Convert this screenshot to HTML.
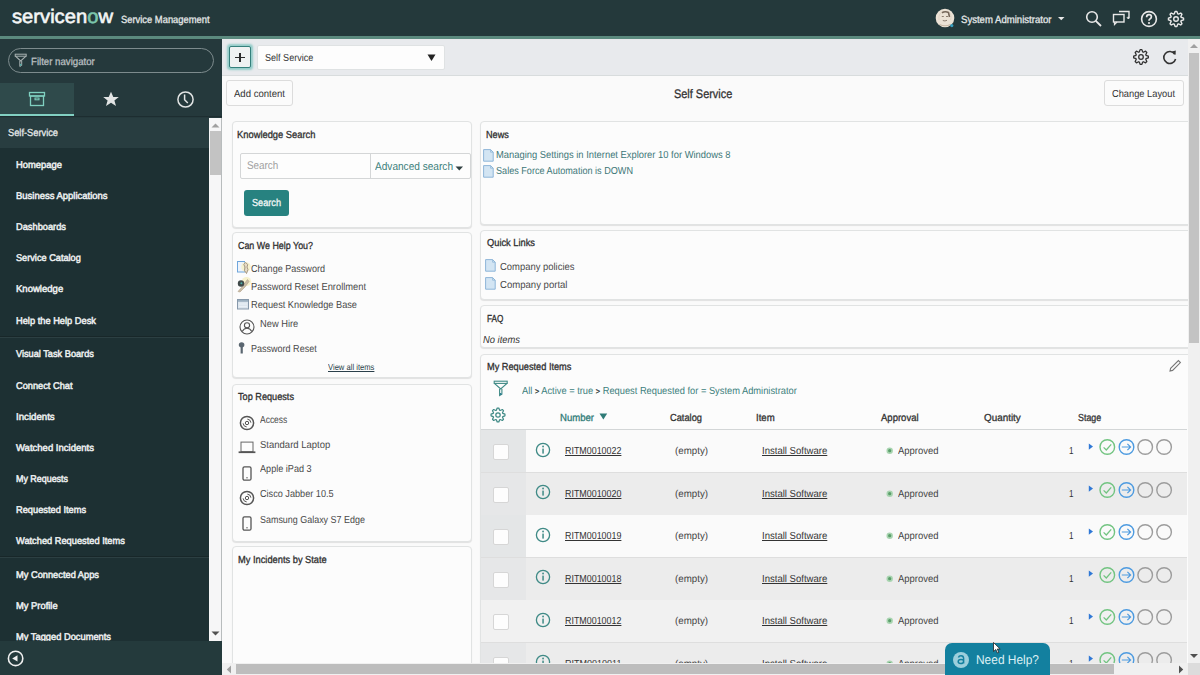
<!DOCTYPE html>
<html><head><meta charset="utf-8"><title>ServiceNow Self Service</title>
<style>
html,body{margin:0;padding:0;}
body{width:1200px;height:675px;overflow:hidden;position:relative;background:#f8f8f8;font-family:"Liberation Sans", sans-serif;}
.t{position:absolute;white-space:nowrap;transform-origin:0 0;text-rendering:geometricPrecision;}
svg{position:absolute;overflow:visible;}
</style></head><body>
<div style="position:absolute;left:0px;top:0px;width:1200px;height:36px;background:#24393b;"></div>
<div style="position:absolute;left:0px;top:36px;width:1200px;height:3px;background:#5b8a7e;"></div>
<span class="t" id="t0" style="left:12px;top:7.91px;font-size:19.5px;line-height:19.5px;color:#f4f6f6;transform:scaleX(1.0351);-webkit-text-stroke:0.6px #f4f6f6;">servicen<span style="color:#7cc7ad;-webkit-text-stroke:0.6px #7cc7ad">o</span>w</span>
<span class="t" id="t1" style="left:121px;top:16.34px;font-size:10.4px;line-height:10.4px;color:#e4e8e8;-webkit-text-stroke:0.3px #e4e8e8;transform:scaleX(0.9024);">Service Management</span>
<svg style="left:935px;top:8px" width="22" height="22" viewBox="0 0 22 22"><circle cx="10" cy="10" r="9.3" fill="#ebe2d5"/><path d="M4 12Q3 5 8.5 3.5Q13.5 2.5 15.5 6Q17 9 15.5 12" fill="none" stroke="#e0d4c4" stroke-width="1"/><path d="M7 4.8Q10 3 13.5 4.5L14.5 9" fill="none" stroke="#75675a" stroke-width="1.6"/><path d="M6.8 8.5H8.8M11 8.5H13" stroke="#8d7f70" stroke-width="1"/><path d="M7.8 12.5Q10 13.5 12 12.3" fill="none" stroke="#8d7f70" stroke-width="1"/><path d="M4.5 16.5Q10 19 15.5 16.5" fill="none" stroke="#c8b8a4" stroke-width="1.2"/><circle cx="16.8" cy="17.6" r="1.6" fill="#3aa0c0"/></svg>
<span class="t" id="t2" style="left:961px;top:16.14px;font-size:10.4px;line-height:10.4px;color:#e4e8e8;-webkit-text-stroke:0.3px #e4e8e8;transform:scaleX(0.9208);">System Administrator</span>
<svg style="left:1058px;top:17px" width="7" height="4"><path d="M0 0H6.5L3.25 3.2Z" fill="#e8e8e8"/></svg>
<svg style="left:1084px;top:9px" width="20" height="20" viewBox="0 0 20 20"><circle cx="8" cy="8" r="5.3" fill="none" stroke="#e8e8e8" stroke-width="1.6"/><path d="M11.8 11.8L17 17" stroke="#e8e8e8" stroke-width="1.8"/></svg>
<svg style="left:1110px;top:9px" width="22" height="20" viewBox="0 0 22 20"><path d="M9 2.5H19V8.5H17.5" fill="none" stroke="#e8e8e8" stroke-width="1.4"/><path d="M17 8.5L18.5 10L19 8.5" fill="#e8e8e8" stroke="#e8e8e8" stroke-width="1"/><rect x="3.5" y="5.5" width="10.5" height="7.5" fill="none" stroke="#e8e8e8" stroke-width="1.4"/><path d="M4.5 13V15.5L7 13" fill="none" stroke="#e8e8e8" stroke-width="1.2"/></svg>
<svg style="left:1139px;top:9px" width="20" height="20" viewBox="0 0 20 20"><circle cx="10" cy="10" r="7.4" fill="none" stroke="#e8e8e8" stroke-width="1.6"/><path d="M7.6 8.2Q7.6 5.6 10 5.6Q12.4 5.6 12.4 7.8Q12.4 9.2 10.9 9.9Q10 10.4 10 11.8" fill="none" stroke="#e8e8e8" stroke-width="1.7"/><circle cx="10" cy="14" r="1.1" fill="#e8e8e8"/></svg>
<svg style="left:1165px;top:8px" width="22" height="22" viewBox="0 0 22 22"><path d="M9.25 5.89L10.11 3.45L11.89 3.45L12.75 5.89L13.38 6.15L15.71 5.03L16.97 6.29L15.85 8.62L16.11 9.25L18.55 10.11L18.55 11.89L16.11 12.75L15.85 13.38L16.97 15.71L15.71 16.97L13.38 15.85L12.75 16.11L11.89 18.55L10.11 18.55L9.25 16.11L8.62 15.85L6.29 16.97L5.03 15.71L6.15 13.38L5.89 12.75L3.45 11.89L3.45 10.11L5.89 9.25L6.15 8.62L5.03 6.29L6.29 5.03L8.62 6.15Z" fill="none" stroke="#e8e8e8" stroke-width="1.4" stroke-linejoin="round"/><circle cx="11" cy="11" r="2.3" fill="none" stroke="#e8e8e8" stroke-width="1.4"/></svg>
<div style="position:absolute;left:0px;top:39px;width:222px;height:636px;background:#25393c;"></div>
<div style="position:absolute;left:8px;top:48px;width:204px;height:23px;border:1px solid #7d8b8d;border-radius:12.5px;"></div>
<svg style="left:14px;top:53px" width="14" height="15" viewBox="0 0 14 15"><rect x="1.2" y="1.2" width="11" height="2" fill="none" stroke="#a9b2b3" stroke-width="1"/><path d="M1.4 3.2L6.7 8L12 3.2" fill="none" stroke="#a9b2b3" stroke-width="1.1"/><path d="M5.8 8V13.5L7.7 12.4V8" fill="none" stroke="#a9b2b3" stroke-width="1"/><rect x="6.1" y="11" width="1.3" height="1.6" fill="#4fb8b0"/></svg>
<span class="t" id="t3" style="left:31px;top:57.54px;font-size:10.4px;line-height:10.4px;color:#b9bfc0;-webkit-text-stroke:0.3px #b9bfc0;transform:scaleX(0.9282);">Filter navigator</span>
<div style="position:absolute;left:0px;top:83px;width:74px;height:34px;background:#2f4a4b;"></div>
<div style="position:absolute;left:0px;top:114px;width:74px;height:3px;background:#82d0c2;"></div>
<svg style="left:28px;top:91px" width="18" height="16" viewBox="0 0 18 16"><rect x="1.5" y="1.5" width="15" height="3.5" fill="none" stroke="#7fd0c0" stroke-width="1.3"/><rect x="2.5" y="5" width="13" height="9.5" fill="none" stroke="#7fd0c0" stroke-width="1.3"/><rect x="7" y="7" width="4" height="1.8" fill="none" stroke="#7fd0c0" stroke-width="1"/></svg>
<svg style="left:102px;top:91px" width="18" height="17" viewBox="0 0 18 17"><path d="M9 0.8L11.3 6H16.8L12.4 9.4L14 15L9 11.7L4 15L5.6 9.4L1.2 6H6.7Z" fill="#e2e4e4"/></svg>
<svg style="left:176px;top:90px" width="19" height="19" viewBox="0 0 19 19"><circle cx="9.5" cy="9.5" r="7.6" fill="none" stroke="#e2e4e4" stroke-width="1.5"/><path d="M8.6 4.5V9.8L11.8 13" fill="none" stroke="#e2e4e4" stroke-width="1.5"/></svg>
<div style="position:absolute;left:0px;top:116px;width:222px;height:1px;background:#1d2d30;"></div>
<div style="position:absolute;left:0px;top:118px;width:209px;height:30px;background:#283d40;"></div>
<span class="t" id="t4" style="left:8px;top:129.24px;font-size:10.2px;line-height:10.2px;color:#e6eaea;-webkit-text-stroke:0.3px #e6eaea;transform:scaleX(0.9104);">Self-Service</span>
<div style="position:absolute;left:0px;top:148px;width:209px;height:493px;background:#1d3033;"></div>
<div style="position:absolute;left:0px;top:336px;width:209px;height:1px;background:#182729;"></div>
<div style="position:absolute;left:0px;top:337px;width:209px;height:1px;background:#2c3f42;"></div>
<div style="position:absolute;left:0px;top:556px;width:209px;height:1px;background:#182729;"></div>
<div style="position:absolute;left:0px;top:557px;width:209px;height:1px;background:#2c3f42;"></div>
<span class="t" id="t5" style="left:16px;top:160.66px;font-size:9.8px;line-height:9.8px;color:#eceff0;-webkit-text-stroke:0.3px #eceff0;transform:scaleX(0.9596);-webkit-text-stroke:0.5px #eceff0;">Homepage</span>
<span class="t" id="t6" style="left:16px;top:191.86px;font-size:9.8px;line-height:9.8px;color:#eceff0;-webkit-text-stroke:0.3px #eceff0;transform:scaleX(0.9655);-webkit-text-stroke:0.5px #eceff0;">Business Applications</span>
<span class="t" id="t7" style="left:16px;top:223.06px;font-size:9.8px;line-height:9.8px;color:#eceff0;-webkit-text-stroke:0.3px #eceff0;transform:scaleX(0.9465);-webkit-text-stroke:0.5px #eceff0;">Dashboards</span>
<span class="t" id="t8" style="left:16px;top:254.26px;font-size:9.8px;line-height:9.8px;color:#eceff0;-webkit-text-stroke:0.3px #eceff0;transform:scaleX(0.9368);-webkit-text-stroke:0.5px #eceff0;">Service Catalog</span>
<span class="t" id="t9" style="left:16px;top:285.46px;font-size:9.8px;line-height:9.8px;color:#eceff0;-webkit-text-stroke:0.3px #eceff0;transform:scaleX(0.9735);-webkit-text-stroke:0.5px #eceff0;">Knowledge</span>
<span class="t" id="t10" style="left:16px;top:316.66px;font-size:9.8px;line-height:9.8px;color:#eceff0;-webkit-text-stroke:0.3px #eceff0;transform:scaleX(0.9478);-webkit-text-stroke:0.5px #eceff0;">Help the Help Desk</span>
<span class="t" id="t11" style="left:16px;top:349.96px;font-size:9.8px;line-height:9.8px;color:#eceff0;-webkit-text-stroke:0.3px #eceff0;transform:scaleX(0.9389);-webkit-text-stroke:0.5px #eceff0;">Visual Task Boards</span>
<span class="t" id="t12" style="left:16px;top:381.56px;font-size:9.8px;line-height:9.8px;color:#eceff0;-webkit-text-stroke:0.3px #eceff0;transform:scaleX(0.9431);-webkit-text-stroke:0.5px #eceff0;">Connect Chat</span>
<span class="t" id="t13" style="left:16px;top:412.76px;font-size:9.8px;line-height:9.8px;color:#eceff0;-webkit-text-stroke:0.3px #eceff0;transform:scaleX(0.9868);-webkit-text-stroke:0.5px #eceff0;">Incidents</span>
<span class="t" id="t14" style="left:16px;top:443.96px;font-size:9.8px;line-height:9.8px;color:#eceff0;-webkit-text-stroke:0.3px #eceff0;transform:scaleX(0.9709);-webkit-text-stroke:0.5px #eceff0;">Watched Incidents</span>
<span class="t" id="t15" style="left:16px;top:475.16px;font-size:9.8px;line-height:9.8px;color:#eceff0;-webkit-text-stroke:0.3px #eceff0;transform:scaleX(0.9095);-webkit-text-stroke:0.5px #eceff0;">My Requests</span>
<span class="t" id="t16" style="left:16px;top:506.46px;font-size:9.8px;line-height:9.8px;color:#eceff0;-webkit-text-stroke:0.3px #eceff0;transform:scaleX(0.9465);-webkit-text-stroke:0.5px #eceff0;">Requested Items</span>
<span class="t" id="t17" style="left:16px;top:537.46px;font-size:9.8px;line-height:9.8px;color:#eceff0;-webkit-text-stroke:0.3px #eceff0;transform:scaleX(0.9453);-webkit-text-stroke:0.5px #eceff0;">Watched Requested Items</span>
<span class="t" id="t18" style="left:16px;top:570.66px;font-size:9.8px;line-height:9.8px;color:#eceff0;-webkit-text-stroke:0.3px #eceff0;transform:scaleX(0.9465);-webkit-text-stroke:0.5px #eceff0;">My Connected Apps</span>
<span class="t" id="t19" style="left:16px;top:601.66px;font-size:9.8px;line-height:9.8px;color:#eceff0;-webkit-text-stroke:0.3px #eceff0;transform:scaleX(0.9549);-webkit-text-stroke:0.5px #eceff0;">My Profile</span>
<span class="t" id="t20" style="left:16px;top:632.86px;font-size:9.8px;line-height:9.8px;color:#eceff0;-webkit-text-stroke:0.3px #eceff0;transform:scaleX(0.9497);-webkit-text-stroke:0.5px #eceff0;">My Tagged Documents</span>
<div style="position:absolute;left:209px;top:118px;width:13px;height:523px;background:#f6f6f7;"></div>
<div style="position:absolute;left:210px;top:131px;width:11px;height:44px;background:#c3c3c3;"></div>
<svg style="left:211px;top:123px" width="9" height="5"><path d="M0.5 4.5H8.5L4.5 0.5Z" fill="#a0a0a0"/></svg>
<svg style="left:211px;top:631px" width="9" height="5"><path d="M0.5 0.5H8.5L4.5 4.5Z" fill="#505050"/></svg>
<div style="position:absolute;left:0px;top:641px;width:222px;height:34px;background:#243a3c;"></div>
<svg style="left:7px;top:650px" width="18" height="18" viewBox="0 0 18 18"><circle cx="8.6" cy="8.4" r="7.2" fill="none" stroke="#f0f0f0" stroke-width="1.6"/><path d="M5.2 8.4L10.5 5.2V11.6Z" fill="#f0f0f0"/></svg>
<div style="position:absolute;left:222px;top:39px;width:966px;height:37px;background:#e8eaed;"></div>
<div style="position:absolute;left:222px;top:75px;width:966px;height:1px;background:#d8dcdd;"></div>
<div style="position:absolute;left:222px;top:76px;width:966px;height:587px;background:#fafafa;"></div>
<div style="position:absolute;left:221px;top:118px;width:1px;height:523px;background:#b8bcbd;"></div>
<div style="position:absolute;left:228.5px;top:45.5px;width:20px;height:20px;background:#eff2f2;border:1.5px solid #35807c;border-radius:2px;box-shadow:0 0 2px 1.5px rgba(120,195,190,0.75);"></div>
<div style="position:absolute;left:235.3px;top:56.8px;width:9.6px;height:1.4px;background:#2b2b2b;"></div>
<div style="position:absolute;left:239.4px;top:52.6px;width:1.4px;height:9.6px;background:#2b2b2b;"></div>
<div style="position:absolute;left:257px;top:45px;width:186px;height:23px;background:#fdfdfd;border:1px solid #dfe2e3;border-radius:2px;"></div>
<span class="t" id="t21" style="left:264.7px;top:54.04px;font-size:10.2px;line-height:10.2px;color:#333;transform:scaleX(0.8885);">Self Service</span>
<svg style="left:427px;top:54px" width="9" height="8"><path d="M0.5 0.5H8.5L4.5 7Z" fill="#222"/></svg>
<svg style="left:1129.6px;top:45.7px" width="22" height="22" viewBox="0 0 22 22"><path d="M9.28 5.99L10.13 3.65L11.87 3.65L12.72 5.99L13.33 6.24L15.58 5.19L16.81 6.42L15.76 8.67L16.01 9.28L18.35 10.13L18.35 11.87L16.01 12.72L15.76 13.33L16.81 15.58L15.58 16.81L13.33 15.76L12.72 16.01L11.87 18.35L10.13 18.35L9.28 16.01L8.67 15.76L6.42 16.81L5.19 15.58L6.24 13.33L5.99 12.72L3.65 11.87L3.65 10.13L5.99 9.28L6.24 8.67L5.19 6.42L6.42 5.19L8.67 6.24Z" fill="none" stroke="#333" stroke-width="1.3" stroke-linejoin="round"/><circle cx="11" cy="11" r="2.3" fill="none" stroke="#333" stroke-width="1.3"/></svg>
<svg style="left:1160px;top:47px" width="20" height="20" viewBox="0 0 20 20"><path d="M14.8 7.2A6 6 0 1 0 15.6 12" fill="none" stroke="#333" stroke-width="1.6"/><path d="M12 4.5L15.8 3.6L15.5 8Z" fill="#333"/></svg>
<div style="position:absolute;left:226px;top:80px;width:65px;height:24px;border:1px solid #dcdcdc;border-radius:3px;background:#fbfbfb;"></div>
<span class="t" id="t22" style="left:234.2px;top:90.04px;font-size:10.2px;line-height:10.2px;color:#333;transform:scaleX(0.9379);">Add content</span>
<span class="t" id="t23" style="left:673.75px;top:87.90px;font-size:12.4px;line-height:12.4px;color:#333;-webkit-text-stroke:0.3px #333;transform:scaleX(0.8817);">Self Service</span>
<div style="position:absolute;left:1104px;top:80px;width:78px;height:24px;border:1px solid #dcdcdc;border-radius:3px;background:#fbfbfb;"></div>
<span class="t" id="t24" style="left:1112px;top:89.94px;font-size:10.2px;line-height:10.2px;color:#333;transform:scaleX(0.9116);">Change Layout</span>
<div style="position:absolute;left:232px;top:121px;width:238px;height:105px;border:1px solid #e1e3e3;border-radius:4px;background:#fcfcfc;box-shadow:0 1px 1px rgba(0,0,0,0.10);"></div>
<span class="t" id="t25" style="left:237.4px;top:130.74px;font-size:10.2px;line-height:10.2px;color:#2f2f2f;-webkit-text-stroke:0.3px #2f2f2f;transform:scaleX(0.9178);">Knowledge Search</span>
<div style="position:absolute;left:240px;top:153px;width:229px;height:24px;border:1px solid #d4d6d7;border-radius:2px;background:#fdfdfd;"></div>
<div style="position:absolute;left:370px;top:154px;width:1px;height:24px;background:#d4d6d7;"></div>
<span class="t" id="t26" style="left:246.75px;top:161.39px;font-size:11.2px;line-height:11.2px;color:#a0a0a0;transform:scaleX(0.8829);">Search</span>
<span class="t" id="t27" style="left:374.9px;top:161.69px;font-size:11.2px;line-height:11.2px;color:#3b7f7b;transform:scaleX(0.9022);">Advanced search</span>
<svg style="left:455px;top:166px" width="9" height="6"><path d="M0.5 0.5H8L4.25 4.5Z" fill="#2f3f40"/></svg>
<div style="position:absolute;left:244px;top:190px;width:45px;height:26px;background:#278280;border-radius:3px;"></div>
<span class="t" id="t28" style="left:252px;top:199.49px;font-size:10.2px;line-height:10.2px;color:#f4f8f8;-webkit-text-stroke:0.3px #f4f8f8;transform:scaleX(0.8984);">Search</span>
<div style="position:absolute;left:232px;top:232px;width:238px;height:144px;border:1px solid #e1e3e3;border-radius:4px;background:#fcfcfc;box-shadow:0 1px 1px rgba(0,0,0,0.10);"></div>
<span class="t" id="t29" style="left:237.6px;top:242.24px;font-size:10.2px;line-height:10.2px;color:#2f2f2f;-webkit-text-stroke:0.3px #2f2f2f;transform:scaleX(0.8730);">Can We Help You?</span>
<svg style="left:236px;top:260px" width="15" height="16" viewBox="0 0 15 16"><rect x="1.5" y="1.5" width="7" height="10.5" fill="#eef4fb" stroke="#6fa6dc" stroke-width="1"/><circle cx="10" cy="7" r="4.8" fill="#f6f0c4" opacity="0.8"/><path d="M9.5 2.5L11.8 4.5L11 7L12 9.5L10.5 13.5L8.5 10.5L9 7L7.8 4.5Z" fill="#e6dcc8" stroke="#9d8f78" stroke-width="0.9"/></svg>
<span class="t" id="t30" style="left:250.9px;top:264.84px;font-size:10.2px;line-height:10.2px;color:#4a4a4a;transform:scaleX(0.8889);">Change Password</span>
<svg style="left:236px;top:276px" width="15" height="17" viewBox="0 0 15 17"><circle cx="10.5" cy="5.5" r="4.6" fill="#f6f0c4" opacity="0.85"/><path d="M2 15.5L5.5 11.5L11.5 3.5L13 5.5L9 11L4 16Z" fill="#cbbda6" stroke="#b0a088" stroke-width="0.6"/><circle cx="5" cy="7.5" r="3.2" fill="#404a4a"/><circle cx="5.4" cy="7.2" r="1" fill="#4fb0a8"/></svg>
<span class="t" id="t31" style="left:251px;top:282.84px;font-size:10.2px;line-height:10.2px;color:#4a4a4a;transform:scaleX(0.9149);">Password Reset Enrollment</span>
<svg style="left:237px;top:299px" width="12" height="11" viewBox="0 0 12 11"><rect x="0.5" y="0.5" width="11" height="9.5" fill="#dde6ee" stroke="#8799ab" stroke-width="1"/><rect x="1" y="1" width="10" height="1.8" fill="#9cb0c0"/><path d="M2 5H10M2 7.5H10" stroke="#eef3f7" stroke-width="0.8"/></svg>
<span class="t" id="t32" style="left:251px;top:300.94px;font-size:10.2px;line-height:10.2px;color:#4a4a4a;transform:scaleX(0.9041);">Request Knowledge Base</span>
<svg style="left:239px;top:319px" width="16" height="16" viewBox="0 0 16 16"><circle cx="8" cy="8" r="7" fill="none" stroke="#555" stroke-width="1.1"/><circle cx="8" cy="6.3" r="2.6" fill="none" stroke="#555" stroke-width="1.1"/><path d="M3.2 12.5Q5 9.3 8 9.3Q11 9.3 12.8 12.5" fill="none" stroke="#555" stroke-width="1.1"/></svg>
<span class="t" id="t33" style="left:259.7px;top:319.84px;font-size:10.2px;line-height:10.2px;color:#4a4a4a;transform:scaleX(0.9143);">New Hire</span>
<svg style="left:238px;top:342px" width="8" height="12" viewBox="0 0 8 12"><ellipse cx="3.6" cy="2.8" rx="2.8" ry="2.6" fill="#5a6670"/><rect x="2.6" y="4" width="2.2" height="7.5" fill="#5a6670"/></svg>
<span class="t" id="t34" style="left:251px;top:344.94px;font-size:10.2px;line-height:10.2px;color:#4a4a4a;transform:scaleX(0.8856);">Password Reset</span>
<span class="t" id="t35" style="left:328.3px;top:363.12px;font-size:8.6px;line-height:8.6px;color:#2a3f4a;text-decoration:underline;transform:scaleX(0.8857);">View all items</span>
<div style="position:absolute;left:232px;top:384px;width:238px;height:156px;border:1px solid #e1e3e3;border-radius:4px;background:#fcfcfc;box-shadow:0 1px 1px rgba(0,0,0,0.10);"></div>
<span class="t" id="t36" style="left:238px;top:392.54px;font-size:10.2px;line-height:10.2px;color:#2f2f2f;-webkit-text-stroke:0.3px #2f2f2f;transform:scaleX(0.8989);">Top Requests</span>
<svg style="left:239px;top:415px" width="16" height="16" viewBox="0 0 16 16"><circle cx="8" cy="8" r="6.6" fill="none" stroke="#555" stroke-width="1.5"/><circle cx="8" cy="8" r="1.7" fill="none" stroke="#555" stroke-width="1"/><path d="M7.66 11.89A3.9 3.9 0 0 1 4.11 8.34M8.34 4.11A3.9 3.9 0 0 1 11.89 7.66" fill="none" stroke="#555" stroke-width="1"/></svg>
<span class="t" id="t37" style="left:259.7px;top:415.94px;font-size:10.2px;line-height:10.2px;color:#4a4a4a;transform:scaleX(0.8312);">Access</span>
<svg style="left:238px;top:441px" width="18" height="13" viewBox="0 0 18 13"><rect x="3" y="1.1" width="12" height="9.6" fill="none" stroke="#666" stroke-width="1"/><rect x="0.6" y="10.4" width="16.8" height="1.7" fill="#555"/></svg>
<span class="t" id="t38" style="left:259.7px;top:440.54px;font-size:10.2px;line-height:10.2px;color:#4a4a4a;transform:scaleX(0.9331);">Standard Laptop</span>
<svg style="left:242px;top:466px" width="10" height="15" viewBox="0 0 10 15"><rect x="1" y="0.8" width="8" height="13.4" rx="1.5" fill="none" stroke="#555" stroke-width="1.3"/><circle cx="5" cy="11.8" r="0.7" fill="#555"/></svg>
<span class="t" id="t39" style="left:259.7px;top:465.44px;font-size:10.2px;line-height:10.2px;color:#4a4a4a;transform:scaleX(0.8930);">Apple iPad 3</span>
<svg style="left:239px;top:490px" width="16" height="16" viewBox="0 0 16 16"><circle cx="8" cy="8" r="6.6" fill="none" stroke="#555" stroke-width="1.5"/><circle cx="8" cy="8" r="1.7" fill="none" stroke="#555" stroke-width="1"/><path d="M7.66 11.89A3.9 3.9 0 0 1 4.11 8.34M8.34 4.11A3.9 3.9 0 0 1 11.89 7.66" fill="none" stroke="#555" stroke-width="1"/></svg>
<span class="t" id="t40" style="left:259.7px;top:490.34px;font-size:10.2px;line-height:10.2px;color:#4a4a4a;transform:scaleX(0.8962);">Cisco Jabber 10.5</span>
<svg style="left:242px;top:516px" width="10" height="15" viewBox="0 0 10 15"><rect x="1" y="0.8" width="8" height="13.4" rx="1.5" fill="none" stroke="#555" stroke-width="1.3"/><circle cx="5" cy="11.8" r="0.7" fill="#555"/></svg>
<span class="t" id="t41" style="left:259.7px;top:515.74px;font-size:10.2px;line-height:10.2px;color:#4a4a4a;transform:scaleX(0.8778);">Samsung Galaxy S7 Edge</span>
<div style="position:absolute;left:232px;top:546px;width:238px;height:138px;border:1px solid #e1e3e3;border-radius:4px;background:#fcfcfc;box-shadow:0 1px 1px rgba(0,0,0,0.10);"></div>
<span class="t" id="t42" style="left:237.8px;top:555.74px;font-size:10.2px;line-height:10.2px;color:#2f2f2f;-webkit-text-stroke:0.3px #2f2f2f;transform:scaleX(0.9116);">My Incidents by State</span>
<div style="position:absolute;left:480px;top:121px;width:712px;height:102px;border:1px solid #e1e3e3;border-radius:4px;background:#fcfcfc;box-shadow:0 1px 1px rgba(0,0,0,0.10);"></div>
<span class="t" id="t43" style="left:486.4px;top:130.74px;font-size:10.2px;line-height:10.2px;color:#2f2f2f;-webkit-text-stroke:0.3px #2f2f2f;transform:scaleX(0.8947);">News</span>
<svg style="left:483px;top:149px" width="11" height="13" viewBox="0 0 11 13"><path d="M0.6 0.6H7.6L10.2 3.2V12.2H0.6Z" fill="#d3e5f3" stroke="#8fb6d8" stroke-width="1"/><path d="M7.6 0.6V3.2H10.2" fill="none" stroke="#8fb6d8" stroke-width="0.8"/></svg>
<span class="t" id="t44" style="left:495.5px;top:151.34px;font-size:10.2px;line-height:10.2px;color:#3c7778;transform:scaleX(0.9202);">Managing Settings in Internet Explorer 10 for Windows 8</span>
<svg style="left:483px;top:165px" width="11" height="13" viewBox="0 0 11 13"><path d="M0.6 0.6H7.6L10.2 3.2V12.2H0.6Z" fill="#d3e5f3" stroke="#8fb6d8" stroke-width="1"/><path d="M7.6 0.6V3.2H10.2" fill="none" stroke="#8fb6d8" stroke-width="0.8"/></svg>
<span class="t" id="t45" style="left:495.5px;top:166.94px;font-size:10.2px;line-height:10.2px;color:#3c7778;transform:scaleX(0.8929);">Sales Force Automation is DOWN</span>
<div style="position:absolute;left:480px;top:230px;width:712px;height:68px;border:1px solid #e1e3e3;border-radius:4px;background:#fcfcfc;box-shadow:0 1px 1px rgba(0,0,0,0.10);"></div>
<span class="t" id="t46" style="left:486.6px;top:239.44px;font-size:10.2px;line-height:10.2px;color:#2f2f2f;-webkit-text-stroke:0.3px #2f2f2f;transform:scaleX(0.9116);">Quick Links</span>
<svg style="left:485px;top:259px" width="11" height="13" viewBox="0 0 11 13"><path d="M0.6 0.6H7.6L10.2 3.2V12.2H0.6Z" fill="#d3e5f3" stroke="#8fb6d8" stroke-width="1"/><path d="M7.6 0.6V3.2H10.2" fill="none" stroke="#8fb6d8" stroke-width="0.8"/></svg>
<span class="t" id="t47" style="left:500px;top:262.54px;font-size:10.2px;line-height:10.2px;color:#4a4a4a;transform:scaleX(0.9265);">Company policies</span>
<svg style="left:485px;top:277px" width="11" height="13" viewBox="0 0 11 13"><path d="M0.6 0.6H7.6L10.2 3.2V12.2H0.6Z" fill="#d3e5f3" stroke="#8fb6d8" stroke-width="1"/><path d="M7.6 0.6V3.2H10.2" fill="none" stroke="#8fb6d8" stroke-width="0.8"/></svg>
<span class="t" id="t48" style="left:500px;top:281.24px;font-size:10.2px;line-height:10.2px;color:#4a4a4a;transform:scaleX(0.9385);">Company portal</span>
<div style="position:absolute;left:480px;top:305px;width:712px;height:41px;border:1px solid #e1e3e3;border-radius:4px;background:#fcfcfc;box-shadow:0 1px 1px rgba(0,0,0,0.10);"></div>
<span class="t" id="t49" style="left:486.6px;top:314.54px;font-size:10.2px;line-height:10.2px;color:#2f2f2f;-webkit-text-stroke:0.3px #2f2f2f;transform:scaleX(0.8043);">FAQ</span>
<span class="t" id="t50" style="left:483.3px;top:335.74px;font-size:10.2px;line-height:10.2px;color:#333;font-style:italic;transform:scaleX(0.9203);">No items</span>
<div style="position:absolute;left:480px;top:354px;width:712px;height:338px;border:1px solid #e1e3e3;border-radius:4px;background:#fcfcfc;box-shadow:0 1px 1px rgba(0,0,0,0.10);"></div>
<span class="t" id="t51" style="left:486.7px;top:363.14px;font-size:10.2px;line-height:10.2px;color:#2f2f2f;-webkit-text-stroke:0.3px #2f2f2f;transform:scaleX(0.9033);">My Requested Items</span>
<svg style="left:1168px;top:359px" width="14" height="14" viewBox="0 0 14 14"><path d="M2 12L2.6 9.4L10.4 1.6L12.4 3.6L4.6 11.4Z" fill="none" stroke="#777" stroke-width="1.1"/></svg>
<svg style="left:493px;top:380px" width="16" height="17" viewBox="0 0 16 17"><rect x="1.2" y="1.2" width="13" height="2.2" fill="none" stroke="#3f8a86" stroke-width="1.1"/><path d="M1.4 3.4L7.7 9L14 3.4" fill="none" stroke="#3f8a86" stroke-width="1.2"/><path d="M6.6 9V15.5L8.9 14.2V9" fill="none" stroke="#3f8a86" stroke-width="1.1"/><rect x="7" y="13" width="1.5" height="2" fill="#2f7f90"/></svg>
<span class="t" id="t52" style="left:521.9px;top:386.74px;font-size:10.2px;line-height:10.2px;color:#3c7f7c;transform:scaleX(0.9130);">All <span style="font-size:8px;color:#2d3b3b;-webkit-text-stroke:0.3px #2d3b3b">&gt;</span> Active = true <span style="font-size:8px;color:#2d3b3b;-webkit-text-stroke:0.3px #2d3b3b">&gt;</span> Request Requested for = System Administrator</span>
<svg style="left:486.7px;top:404.2px" width="22" height="22" viewBox="0 0 22 22"><path d="M9.38 6.27L10.18 4.05L11.82 4.05L12.62 6.27L13.20 6.51L15.33 5.50L16.50 6.67L15.49 8.80L15.73 9.38L17.95 10.18L17.95 11.82L15.73 12.62L15.49 13.20L16.50 15.33L15.33 16.50L13.20 15.49L12.62 15.73L11.82 17.95L10.18 17.95L9.38 15.73L8.80 15.49L6.67 16.50L5.50 15.33L6.51 13.20L6.27 12.62L4.05 11.82L4.05 10.18L6.27 9.38L6.51 8.80L5.50 6.67L6.67 5.50L8.80 6.51Z" fill="none" stroke="#3f8a86" stroke-width="1.2" stroke-linejoin="round"/><circle cx="11" cy="11" r="2.2" fill="none" stroke="#3f8a86" stroke-width="1.2"/></svg>
<span class="t" id="t53" style="left:560.1px;top:414.04px;font-size:10.2px;line-height:10.2px;color:#2f7b77;-webkit-text-stroke:0.3px #2f7b77;transform:scaleX(0.9383);">Number</span>
<svg style="left:599px;top:413px" width="9" height="8"><path d="M0.5 0.5H8.2L4.35 6.6Z" fill="#2f7b77"/></svg>
<span class="t" id="t54" style="left:669.7px;top:414.04px;font-size:10.2px;line-height:10.2px;color:#333;-webkit-text-stroke:0.3px #333;transform:scaleX(0.9110);">Catalog</span>
<span class="t" id="t55" style="left:756.3px;top:414.04px;font-size:10.2px;line-height:10.2px;color:#333;-webkit-text-stroke:0.3px #333;transform:scaleX(0.9431);">Item</span>
<span class="t" id="t56" style="left:881.2px;top:414.04px;font-size:10.2px;line-height:10.2px;color:#333;-webkit-text-stroke:0.3px #333;transform:scaleX(0.9349);">Approval</span>
<span class="t" id="t57" style="left:983.9px;top:414.04px;font-size:10.2px;line-height:10.2px;color:#333;-webkit-text-stroke:0.3px #333;transform:scaleX(0.9696);">Quantity</span>
<span class="t" id="t58" style="left:1078px;top:414.04px;font-size:10.2px;line-height:10.2px;color:#333;-webkit-text-stroke:0.3px #333;transform:scaleX(0.8714);">Stage</span>
<div style="position:absolute;left:481px;top:428.5px;width:706px;height:1.5px;background:#d3d6d7;"></div>
<div style="position:absolute;left:481px;top:430.0px;width:706px;height:42.5px;background:#fafafa;"></div>
<div style="position:absolute;left:481px;top:430.0px;width:45px;height:42.5px;background:#e4e6e7;"></div>
<div style="position:absolute;left:481px;top:472.0px;width:706px;height:1px;background:#dedede;"></div>
<div style="position:absolute;left:493px;top:444.0px;width:14px;height:14px;background:#fdfdfd;border:1px solid #d6d6d6;border-radius:2px;"></div>
<svg style="left:535px;top:441.5px" width="16" height="16" viewBox="0 0 16 16"><circle cx="8" cy="8" r="6.6" fill="none" stroke="#3f8a86" stroke-width="1.3"/><rect x="7.3" y="6.6" width="1.5" height="5" fill="#3f8a86"/><circle cx="8.05" cy="4.5" r="0.9" fill="#3f8a86"/></svg>
<span class="t" id="t59" style="left:565.4px;top:447.24px;font-size:10.2px;line-height:10.2px;color:#333;text-decoration:underline;transform:scaleX(0.8736);">RITM0010022</span>
<span class="t" id="t60" style="left:675px;top:447.24px;font-size:10.2px;line-height:10.2px;color:#444;transform:scaleX(0.9557);">(empty)</span>
<span class="t" id="t61" style="left:761.7px;top:447.24px;font-size:10.2px;line-height:10.2px;color:#333;text-decoration:underline;transform:scaleX(0.9375);">Install Software</span>
<svg style="left:886px;top:447.2px" width="8" height="8"><circle cx="3.7" cy="3.7" r="3.2" fill="#a8d4b0"/><circle cx="3.7" cy="3.7" r="1.6" fill="#5a9e6a"/></svg>
<span class="t" id="t62" style="left:898px;top:447.24px;font-size:10.2px;line-height:10.2px;color:#444;transform:scaleX(0.9284);">Approved</span>
<span class="t" id="t63" style="left:1068.7px;top:447.24px;font-size:10.2px;line-height:10.2px;color:#333;transform:scaleX(0.7934);">1</span>
<svg style="left:1088px;top:442.5px" width="6" height="8"><path d="M0.8 0.6L5 3.6L0.8 6.8Z" fill="#2f78d6"/></svg>
<svg style="left:1099px;top:439.0px" width="74" height="16" viewBox="0 0 74 16"><circle cx="8.3" cy="8" r="7.3" fill="none" stroke="#72c481" stroke-width="1.4"/><path d="M4.6 8.4L7.3 11L12.2 5.4" fill="none" stroke="#72c481" stroke-width="1.3"/><circle cx="27.5" cy="8" r="7.3" fill="none" stroke="#4d9be0" stroke-width="1.4"/><path d="M22.8 8H31.6M28.4 4.8L31.6 8L28.4 11.2" fill="none" stroke="#4d9be0" stroke-width="1.2"/><circle cx="46.2" cy="8" r="7.3" fill="none" stroke="#9c9c9c" stroke-width="1.4"/><circle cx="65.1" cy="8" r="7.3" fill="none" stroke="#9c9c9c" stroke-width="1.4"/></svg>
<div style="position:absolute;left:481px;top:472.5px;width:706px;height:42.5px;background:#ececec;"></div>
<div style="position:absolute;left:481px;top:472.5px;width:45px;height:42.5px;background:#e6e7e8;"></div>
<div style="position:absolute;left:481px;top:514.5px;width:706px;height:1px;background:#dedede;"></div>
<div style="position:absolute;left:493px;top:486.5px;width:14px;height:14px;background:#fdfdfd;border:1px solid #d6d6d6;border-radius:2px;"></div>
<svg style="left:535px;top:484.0px" width="16" height="16" viewBox="0 0 16 16"><circle cx="8" cy="8" r="6.6" fill="none" stroke="#3f8a86" stroke-width="1.3"/><rect x="7.3" y="6.6" width="1.5" height="5" fill="#3f8a86"/><circle cx="8.05" cy="4.5" r="0.9" fill="#3f8a86"/></svg>
<span class="t" id="t64" style="left:565.4px;top:489.74px;font-size:10.2px;line-height:10.2px;color:#333;text-decoration:underline;transform:scaleX(0.8736);">RITM0010020</span>
<span class="t" id="t65" style="left:675px;top:489.74px;font-size:10.2px;line-height:10.2px;color:#444;transform:scaleX(0.9557);">(empty)</span>
<span class="t" id="t66" style="left:761.7px;top:489.74px;font-size:10.2px;line-height:10.2px;color:#333;text-decoration:underline;transform:scaleX(0.9375);">Install Software</span>
<svg style="left:886px;top:489.7px" width="8" height="8"><circle cx="3.7" cy="3.7" r="3.2" fill="#a8d4b0"/><circle cx="3.7" cy="3.7" r="1.6" fill="#5a9e6a"/></svg>
<span class="t" id="t67" style="left:898px;top:489.74px;font-size:10.2px;line-height:10.2px;color:#444;transform:scaleX(0.9284);">Approved</span>
<span class="t" id="t68" style="left:1068.7px;top:489.74px;font-size:10.2px;line-height:10.2px;color:#333;transform:scaleX(0.7934);">1</span>
<svg style="left:1088px;top:485.0px" width="6" height="8"><path d="M0.8 0.6L5 3.6L0.8 6.8Z" fill="#2f78d6"/></svg>
<svg style="left:1099px;top:481.5px" width="74" height="16" viewBox="0 0 74 16"><circle cx="8.3" cy="8" r="7.3" fill="none" stroke="#72c481" stroke-width="1.4"/><path d="M4.6 8.4L7.3 11L12.2 5.4" fill="none" stroke="#72c481" stroke-width="1.3"/><circle cx="27.5" cy="8" r="7.3" fill="none" stroke="#4d9be0" stroke-width="1.4"/><path d="M22.8 8H31.6M28.4 4.8L31.6 8L28.4 11.2" fill="none" stroke="#4d9be0" stroke-width="1.2"/><circle cx="46.2" cy="8" r="7.3" fill="none" stroke="#9c9c9c" stroke-width="1.4"/><circle cx="65.1" cy="8" r="7.3" fill="none" stroke="#9c9c9c" stroke-width="1.4"/></svg>
<div style="position:absolute;left:481px;top:515.0px;width:706px;height:42.5px;background:#fafafa;"></div>
<div style="position:absolute;left:481px;top:515.0px;width:45px;height:42.5px;background:#e4e6e7;"></div>
<div style="position:absolute;left:481px;top:557.0px;width:706px;height:1px;background:#dedede;"></div>
<div style="position:absolute;left:493px;top:529.0px;width:14px;height:14px;background:#fdfdfd;border:1px solid #d6d6d6;border-radius:2px;"></div>
<svg style="left:535px;top:526.5px" width="16" height="16" viewBox="0 0 16 16"><circle cx="8" cy="8" r="6.6" fill="none" stroke="#3f8a86" stroke-width="1.3"/><rect x="7.3" y="6.6" width="1.5" height="5" fill="#3f8a86"/><circle cx="8.05" cy="4.5" r="0.9" fill="#3f8a86"/></svg>
<span class="t" id="t69" style="left:565.4px;top:532.24px;font-size:10.2px;line-height:10.2px;color:#333;text-decoration:underline;transform:scaleX(0.8736);">RITM0010019</span>
<span class="t" id="t70" style="left:675px;top:532.24px;font-size:10.2px;line-height:10.2px;color:#444;transform:scaleX(0.9557);">(empty)</span>
<span class="t" id="t71" style="left:761.7px;top:532.24px;font-size:10.2px;line-height:10.2px;color:#333;text-decoration:underline;transform:scaleX(0.9375);">Install Software</span>
<svg style="left:886px;top:532.2px" width="8" height="8"><circle cx="3.7" cy="3.7" r="3.2" fill="#a8d4b0"/><circle cx="3.7" cy="3.7" r="1.6" fill="#5a9e6a"/></svg>
<span class="t" id="t72" style="left:898px;top:532.24px;font-size:10.2px;line-height:10.2px;color:#444;transform:scaleX(0.9284);">Approved</span>
<span class="t" id="t73" style="left:1068.7px;top:532.24px;font-size:10.2px;line-height:10.2px;color:#333;transform:scaleX(0.7934);">1</span>
<svg style="left:1088px;top:527.5px" width="6" height="8"><path d="M0.8 0.6L5 3.6L0.8 6.8Z" fill="#2f78d6"/></svg>
<svg style="left:1099px;top:524.0px" width="74" height="16" viewBox="0 0 74 16"><circle cx="8.3" cy="8" r="7.3" fill="none" stroke="#72c481" stroke-width="1.4"/><path d="M4.6 8.4L7.3 11L12.2 5.4" fill="none" stroke="#72c481" stroke-width="1.3"/><circle cx="27.5" cy="8" r="7.3" fill="none" stroke="#4d9be0" stroke-width="1.4"/><path d="M22.8 8H31.6M28.4 4.8L31.6 8L28.4 11.2" fill="none" stroke="#4d9be0" stroke-width="1.2"/><circle cx="46.2" cy="8" r="7.3" fill="none" stroke="#9c9c9c" stroke-width="1.4"/><circle cx="65.1" cy="8" r="7.3" fill="none" stroke="#9c9c9c" stroke-width="1.4"/></svg>
<div style="position:absolute;left:481px;top:557.5px;width:706px;height:42.5px;background:#ececec;"></div>
<div style="position:absolute;left:481px;top:557.5px;width:45px;height:42.5px;background:#e6e7e8;"></div>
<div style="position:absolute;left:481px;top:599.5px;width:706px;height:1px;background:#dedede;"></div>
<div style="position:absolute;left:493px;top:571.5px;width:14px;height:14px;background:#fdfdfd;border:1px solid #d6d6d6;border-radius:2px;"></div>
<svg style="left:535px;top:569.0px" width="16" height="16" viewBox="0 0 16 16"><circle cx="8" cy="8" r="6.6" fill="none" stroke="#3f8a86" stroke-width="1.3"/><rect x="7.3" y="6.6" width="1.5" height="5" fill="#3f8a86"/><circle cx="8.05" cy="4.5" r="0.9" fill="#3f8a86"/></svg>
<span class="t" id="t74" style="left:565.4px;top:574.74px;font-size:10.2px;line-height:10.2px;color:#333;text-decoration:underline;transform:scaleX(0.8736);">RITM0010018</span>
<span class="t" id="t75" style="left:675px;top:574.74px;font-size:10.2px;line-height:10.2px;color:#444;transform:scaleX(0.9557);">(empty)</span>
<span class="t" id="t76" style="left:761.7px;top:574.74px;font-size:10.2px;line-height:10.2px;color:#333;text-decoration:underline;transform:scaleX(0.9375);">Install Software</span>
<svg style="left:886px;top:574.7px" width="8" height="8"><circle cx="3.7" cy="3.7" r="3.2" fill="#a8d4b0"/><circle cx="3.7" cy="3.7" r="1.6" fill="#5a9e6a"/></svg>
<span class="t" id="t77" style="left:898px;top:574.74px;font-size:10.2px;line-height:10.2px;color:#444;transform:scaleX(0.9284);">Approved</span>
<span class="t" id="t78" style="left:1068.7px;top:574.74px;font-size:10.2px;line-height:10.2px;color:#333;transform:scaleX(0.7934);">1</span>
<svg style="left:1088px;top:570.0px" width="6" height="8"><path d="M0.8 0.6L5 3.6L0.8 6.8Z" fill="#2f78d6"/></svg>
<svg style="left:1099px;top:566.5px" width="74" height="16" viewBox="0 0 74 16"><circle cx="8.3" cy="8" r="7.3" fill="none" stroke="#72c481" stroke-width="1.4"/><path d="M4.6 8.4L7.3 11L12.2 5.4" fill="none" stroke="#72c481" stroke-width="1.3"/><circle cx="27.5" cy="8" r="7.3" fill="none" stroke="#4d9be0" stroke-width="1.4"/><path d="M22.8 8H31.6M28.4 4.8L31.6 8L28.4 11.2" fill="none" stroke="#4d9be0" stroke-width="1.2"/><circle cx="46.2" cy="8" r="7.3" fill="none" stroke="#9c9c9c" stroke-width="1.4"/><circle cx="65.1" cy="8" r="7.3" fill="none" stroke="#9c9c9c" stroke-width="1.4"/></svg>
<div style="position:absolute;left:481px;top:600.0px;width:706px;height:42.5px;background:#f1f1f1;"></div>
<div style="position:absolute;left:481px;top:642.0px;width:706px;height:1px;background:#dedede;"></div>
<div style="position:absolute;left:493px;top:614.0px;width:14px;height:14px;background:#fdfdfd;border:1px solid #d6d6d6;border-radius:2px;"></div>
<svg style="left:535px;top:611.5px" width="16" height="16" viewBox="0 0 16 16"><circle cx="8" cy="8" r="6.6" fill="none" stroke="#3f8a86" stroke-width="1.3"/><rect x="7.3" y="6.6" width="1.5" height="5" fill="#3f8a86"/><circle cx="8.05" cy="4.5" r="0.9" fill="#3f8a86"/></svg>
<span class="t" id="t79" style="left:565.4px;top:617.24px;font-size:10.2px;line-height:10.2px;color:#333;text-decoration:underline;transform:scaleX(0.8736);">RITM0010012</span>
<span class="t" id="t80" style="left:675px;top:617.24px;font-size:10.2px;line-height:10.2px;color:#444;transform:scaleX(0.9557);">(empty)</span>
<span class="t" id="t81" style="left:761.7px;top:617.24px;font-size:10.2px;line-height:10.2px;color:#333;text-decoration:underline;transform:scaleX(0.9375);">Install Software</span>
<svg style="left:886px;top:617.2px" width="8" height="8"><circle cx="3.7" cy="3.7" r="3.2" fill="#a8d4b0"/><circle cx="3.7" cy="3.7" r="1.6" fill="#5a9e6a"/></svg>
<span class="t" id="t82" style="left:898px;top:617.24px;font-size:10.2px;line-height:10.2px;color:#444;transform:scaleX(0.9284);">Approved</span>
<span class="t" id="t83" style="left:1068.7px;top:617.24px;font-size:10.2px;line-height:10.2px;color:#333;transform:scaleX(0.7934);">1</span>
<svg style="left:1088px;top:612.5px" width="6" height="8"><path d="M0.8 0.6L5 3.6L0.8 6.8Z" fill="#2f78d6"/></svg>
<svg style="left:1099px;top:609.0px" width="74" height="16" viewBox="0 0 74 16"><circle cx="8.3" cy="8" r="7.3" fill="none" stroke="#72c481" stroke-width="1.4"/><path d="M4.6 8.4L7.3 11L12.2 5.4" fill="none" stroke="#72c481" stroke-width="1.3"/><circle cx="27.5" cy="8" r="7.3" fill="none" stroke="#4d9be0" stroke-width="1.4"/><path d="M22.8 8H31.6M28.4 4.8L31.6 8L28.4 11.2" fill="none" stroke="#4d9be0" stroke-width="1.2"/><circle cx="46.2" cy="8" r="7.3" fill="none" stroke="#9c9c9c" stroke-width="1.4"/><circle cx="65.1" cy="8" r="7.3" fill="none" stroke="#9c9c9c" stroke-width="1.4"/></svg>
<div style="position:absolute;left:481px;top:642.5px;width:706px;height:42.5px;background:#ececec;"></div>
<div style="position:absolute;left:481px;top:642.5px;width:45px;height:42.5px;background:#e6e7e8;"></div>
<div style="position:absolute;left:481px;top:684.5px;width:706px;height:1px;background:#dedede;"></div>
<div style="position:absolute;left:493px;top:656.5px;width:14px;height:14px;background:#fdfdfd;border:1px solid #d6d6d6;border-radius:2px;"></div>
<svg style="left:535px;top:654.0px" width="16" height="16" viewBox="0 0 16 16"><circle cx="8" cy="8" r="6.6" fill="none" stroke="#3f8a86" stroke-width="1.3"/><rect x="7.3" y="6.6" width="1.5" height="5" fill="#3f8a86"/><circle cx="8.05" cy="4.5" r="0.9" fill="#3f8a86"/></svg>
<span class="t" id="t84" style="left:565.4px;top:659.74px;font-size:10.2px;line-height:10.2px;color:#333;text-decoration:underline;transform:scaleX(0.8838);">RITM0010011</span>
<span class="t" id="t85" style="left:675px;top:659.74px;font-size:10.2px;line-height:10.2px;color:#444;transform:scaleX(0.9557);">(empty)</span>
<span class="t" id="t86" style="left:761.7px;top:659.74px;font-size:10.2px;line-height:10.2px;color:#333;text-decoration:underline;transform:scaleX(0.9375);">Install Software</span>
<svg style="left:886px;top:659.7px" width="8" height="8"><circle cx="3.7" cy="3.7" r="3.2" fill="#a8d4b0"/><circle cx="3.7" cy="3.7" r="1.6" fill="#5a9e6a"/></svg>
<span class="t" id="t87" style="left:898px;top:659.74px;font-size:10.2px;line-height:10.2px;color:#444;transform:scaleX(0.9284);">Approved</span>
<span class="t" id="t88" style="left:1068.7px;top:659.74px;font-size:10.2px;line-height:10.2px;color:#333;transform:scaleX(0.7934);">1</span>
<svg style="left:1088px;top:655.0px" width="6" height="8"><path d="M0.8 0.6L5 3.6L0.8 6.8Z" fill="#2f78d6"/></svg>
<svg style="left:1099px;top:651.5px" width="74" height="16" viewBox="0 0 74 16"><circle cx="8.3" cy="8" r="7.3" fill="none" stroke="#72c481" stroke-width="1.4"/><path d="M4.6 8.4L7.3 11L12.2 5.4" fill="none" stroke="#72c481" stroke-width="1.3"/><circle cx="27.5" cy="8" r="7.3" fill="none" stroke="#4d9be0" stroke-width="1.4"/><path d="M22.8 8H31.6M28.4 4.8L31.6 8L28.4 11.2" fill="none" stroke="#4d9be0" stroke-width="1.2"/><circle cx="46.2" cy="8" r="7.3" fill="none" stroke="#9c9c9c" stroke-width="1.4"/><circle cx="65.1" cy="8" r="7.3" fill="none" stroke="#9c9c9c" stroke-width="1.4"/></svg>
<div style="position:absolute;left:222px;top:663px;width:966px;height:12px;background:#f0f0f0;"></div>
<div style="position:absolute;left:236px;top:664px;width:878px;height:10px;background:#bdbdbd;"></div>
<svg style="left:226px;top:665px" width="6" height="9"><path d="M5 0.5V8.5L0.8 4.5Z" fill="#a0a0a0"/></svg>
<svg style="left:1178px;top:665px" width="6" height="9"><path d="M1 0.5V8.5L5.2 4.5Z" fill="#505050"/></svg>
<div style="position:absolute;left:1188px;top:39px;width:12px;height:624px;background:#f0f0f0;"></div>
<div style="position:absolute;left:1189px;top:53px;width:10px;height:290px;background:#c3c3c3;"></div>
<svg style="left:1189px;top:43px" width="10" height="6"><path d="M1 5H9L5 1Z" fill="#a0a0a0"/></svg>
<svg style="left:1189px;top:653px" width="10" height="6"><path d="M1 1H9L5 5Z" fill="#505050"/></svg>
<div style="position:absolute;left:1188px;top:663px;width:12px;height:12px;background:#dcdcdc;"></div>
<div style="position:absolute;left:945px;top:643px;width:105px;height:40px;background:#13809f;border-radius:7px;"></div>
<svg style="left:952px;top:651px" width="18" height="18" viewBox="0 0 18 18"><circle cx="9" cy="9" r="8" fill="#9ccfdc"/><path d="M6.4 6.6Q7 4.8 9 4.8Q11.6 4.8 11.6 7.5V12.6M11.6 9.8Q11.6 8.4 9 8.4Q6.2 8.4 6.2 10.6Q6.2 12.6 8.6 12.6Q11.6 12.6 11.6 10.2" fill="none" stroke="#13809f" stroke-width="1.5"/></svg>
<span class="t" id="t89" style="left:975.5px;top:653.95px;font-size:12.8px;line-height:12.8px;color:#dcf0f5;transform:scaleX(0.9320);">Need Help?</span>
<svg style="left:993px;top:642px" width="8" height="12" viewBox="0 0 8 12"><path d="M0.5 0.5V9.5L2.8 7.5L4.4 11L5.8 10.4L4.3 7H7.2Z" fill="#fff" stroke="#222" stroke-width="0.8"/></svg>
</body></html>
